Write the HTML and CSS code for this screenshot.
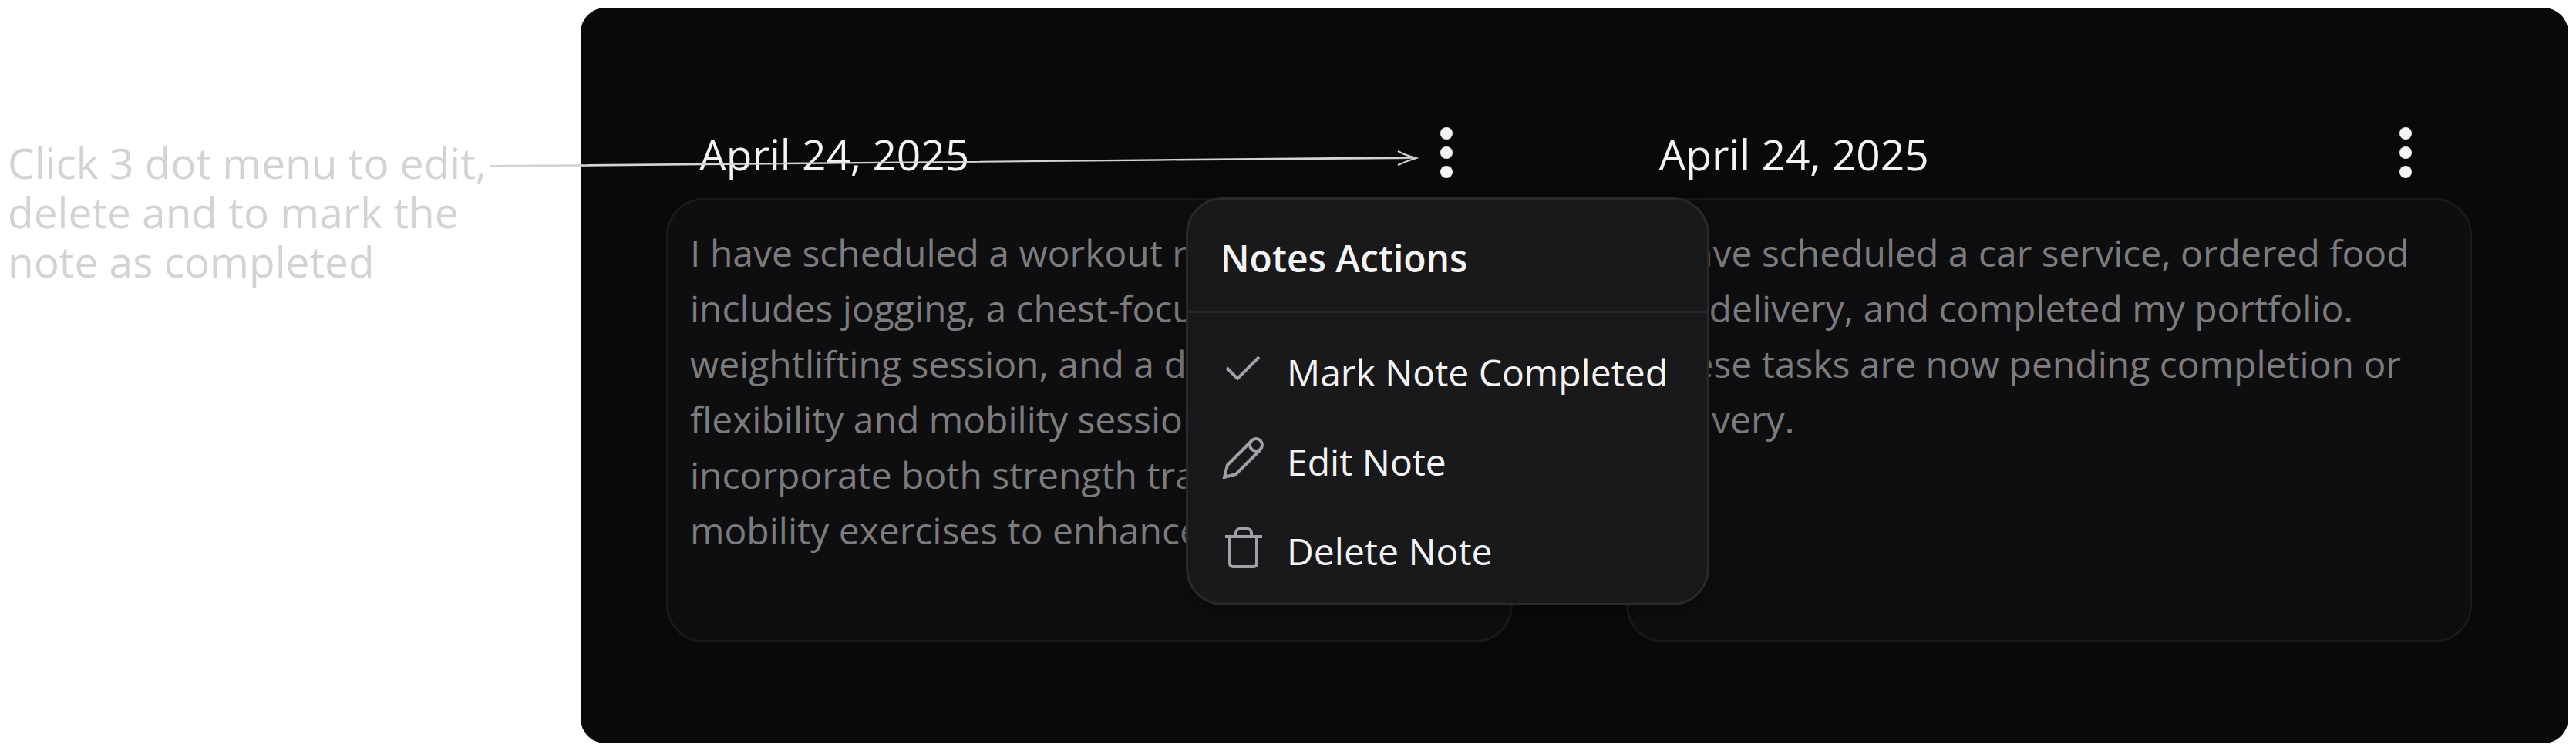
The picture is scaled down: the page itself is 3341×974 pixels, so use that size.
FILE: index.html
```html
<!DOCTYPE html>
<html lang="en">

<head>
  <meta charset="UTF-8" />
  <meta name="viewport" content="width=device-width, initial-scale=1.0" />
  <title>Notes</title>
  <link rel="stylesheet" href="styles.css">
</head>

<body>
  <aside class="hint">
    <p>Click 3 dot menu to edit,<br>delete and to mark the<br>note as completed</p>
    <svg class="arrow" viewBox="0 0 1206 30" aria-hidden="true">
      <path d="M1 20 Q400 15 1203 10 M1 21 Q600 14 1203 9" />
      <path d="M1179 1 Q1190 7 1203 10 Q1190 14 1179 19" />
    </svg>
  </aside>

  <main class="panel">
    <section class="note">
      <header class="note-head">
        <h2>April 24, 2025</h2>
        <button class="dots" aria-label="Note menu">
          <svg viewBox="0 0 16 66"><circle cx="8" cy="8" r="8" /><circle cx="8" cy="33" r="8" /><circle cx="8" cy="58" r="8" /></svg>
        </button>
      </header>
      <div class="note-body">
        <p>I have scheduled a workout routine that<br>includes jogging, a chest-focused<br>weightlifting session, and a dedicated<br>flexibility and mobility session to help<br>incorporate both strength training and<br>mobility exercises to enhance fitness.</p>
      </div>

      <div class="menu">
        <h3>Notes Actions</h3>
        <div class="menu-list">
          <button>
            <svg viewBox="0 0 56 56"><path d="M6 28 L20 42 L48 14" /></svg>
            Mark Note Completed
          </button>
          <button>
            <svg viewBox="0 0 56 56"><circle cx="44" cy="12" r="8" /><path d="M38 7 L7 38 L3 54 L18 50 L49 19" /></svg>
            Edit Note
          </button>
          <button>
            <svg viewBox="0 0 56 56"><path d="M4 15 H52 M10 15 V50 a4 4 0 0 0 4 4 H41 a4 4 0 0 0 4 -4 V15 M18 15 V10 a5 5 0 0 1 5 -5 H33 a5 5 0 0 1 5 5 V15" /></svg>
            Delete Note
          </button>
        </div>
      </div>
    </section>

    <section class="note">
      <header class="note-head">
        <h2>April 24, 2025</h2>
        <button class="dots" aria-label="Note menu">
          <svg viewBox="0 0 16 66"><circle cx="8" cy="8" r="8" /><circle cx="8" cy="33" r="8" /><circle cx="8" cy="58" r="8" /></svg>
        </button>
      </header>
      <div class="note-body">
        <p>I have scheduled a car service, ordered food<br>for delivery, and completed my portfolio.<br>These tasks are now pending completion or<br>delivery.</p>
      </div>
    </section>
  </main>
</body>

</html>
```
FILE: styles.css
```css
* {
  box-sizing: border-box;
}

body {
  display: flex;
  margin: 0;
  padding: 10px;
  background: #fff;
  font-family: "Segoe UI", "Open Sans", sans-serif;
  font-size: 48px;
}

h2,
h3,
p {
  margin: 0;
  font-weight: 400;
}

button {
  padding: 0;
  border: 0;
  background: none;
  color: inherit;
  font: inherit;
}

.hint {
  position: relative;
  flex: 0 0 743px;
  padding-top: 169px;
  font-family: Excalifont, Virgil, "Open Sans", cursive;
  font-size: 55px;
  line-height: 64px;
  color: #d3d3d3;
}

.arrow {
  position: absolute;
  top: 185px;
  left: 624px;
  z-index: 2;
  width: 1206px;
  height: 30px;
  fill: none;
  stroke: #d3d3d3;
  stroke-width: 2;
}

.panel {
  display: flex;
  flex: 1;
  gap: 147px;
  padding: 146px 125px 131px 111px;
  border-radius: 32px;
  background: #09090b;
  color: #f4f4f5;
}

.note {
  position: relative;
  flex: 1;
}

.note-head {
  display: flex;
  align-items: center;
  justify-content: space-between;
  height: 101px;
  padding: 0 78px 18px 43px;
}

.note-head h2 {
  padding-top: 4px;
  font-size: 55px;
  line-height: 72px;
}

.dots svg {
  display: block;
  width: 16px;
  height: 66px;
  fill: #f4f4f5;
}

.note-body {
  min-height: 576px;
  padding: 32px 28px;
  border: 3px solid #1a1a1c;
  border-radius: 48px;
  background: #0e0e10;
  line-height: 72px;
  color: #7c7c7e;
  white-space: nowrap;
}

.menu {
  position: absolute;
  top: 100px;
  left: 674px;
  z-index: 1;
  width: 679px;
  border: 3px solid #29292c;
  border-radius: 48px;
  background: #19191b;
  box-shadow: 0 8px 24px rgba(0, 0, 0, 0.3);
}

.menu h3 {
  padding: 40px 42px 32px;
  border-bottom: 3px solid #29292c;
  font-size: 48px;
  font-weight: 600;
  line-height: 72px;
}

.menu-list {
  padding: 18px 44px 10px;
}

.menu-list button {
  display: flex;
  align-items: center;
  gap: 28px;
  width: 100%;
  height: 116px;
  white-space: nowrap;
}

.menu-list svg {
  flex: none;
  width: 56px;
  height: 56px;
  margin-bottom: 10px;
  fill: none;
  stroke: #a1a1a5;
  stroke-width: 4;
}
```
